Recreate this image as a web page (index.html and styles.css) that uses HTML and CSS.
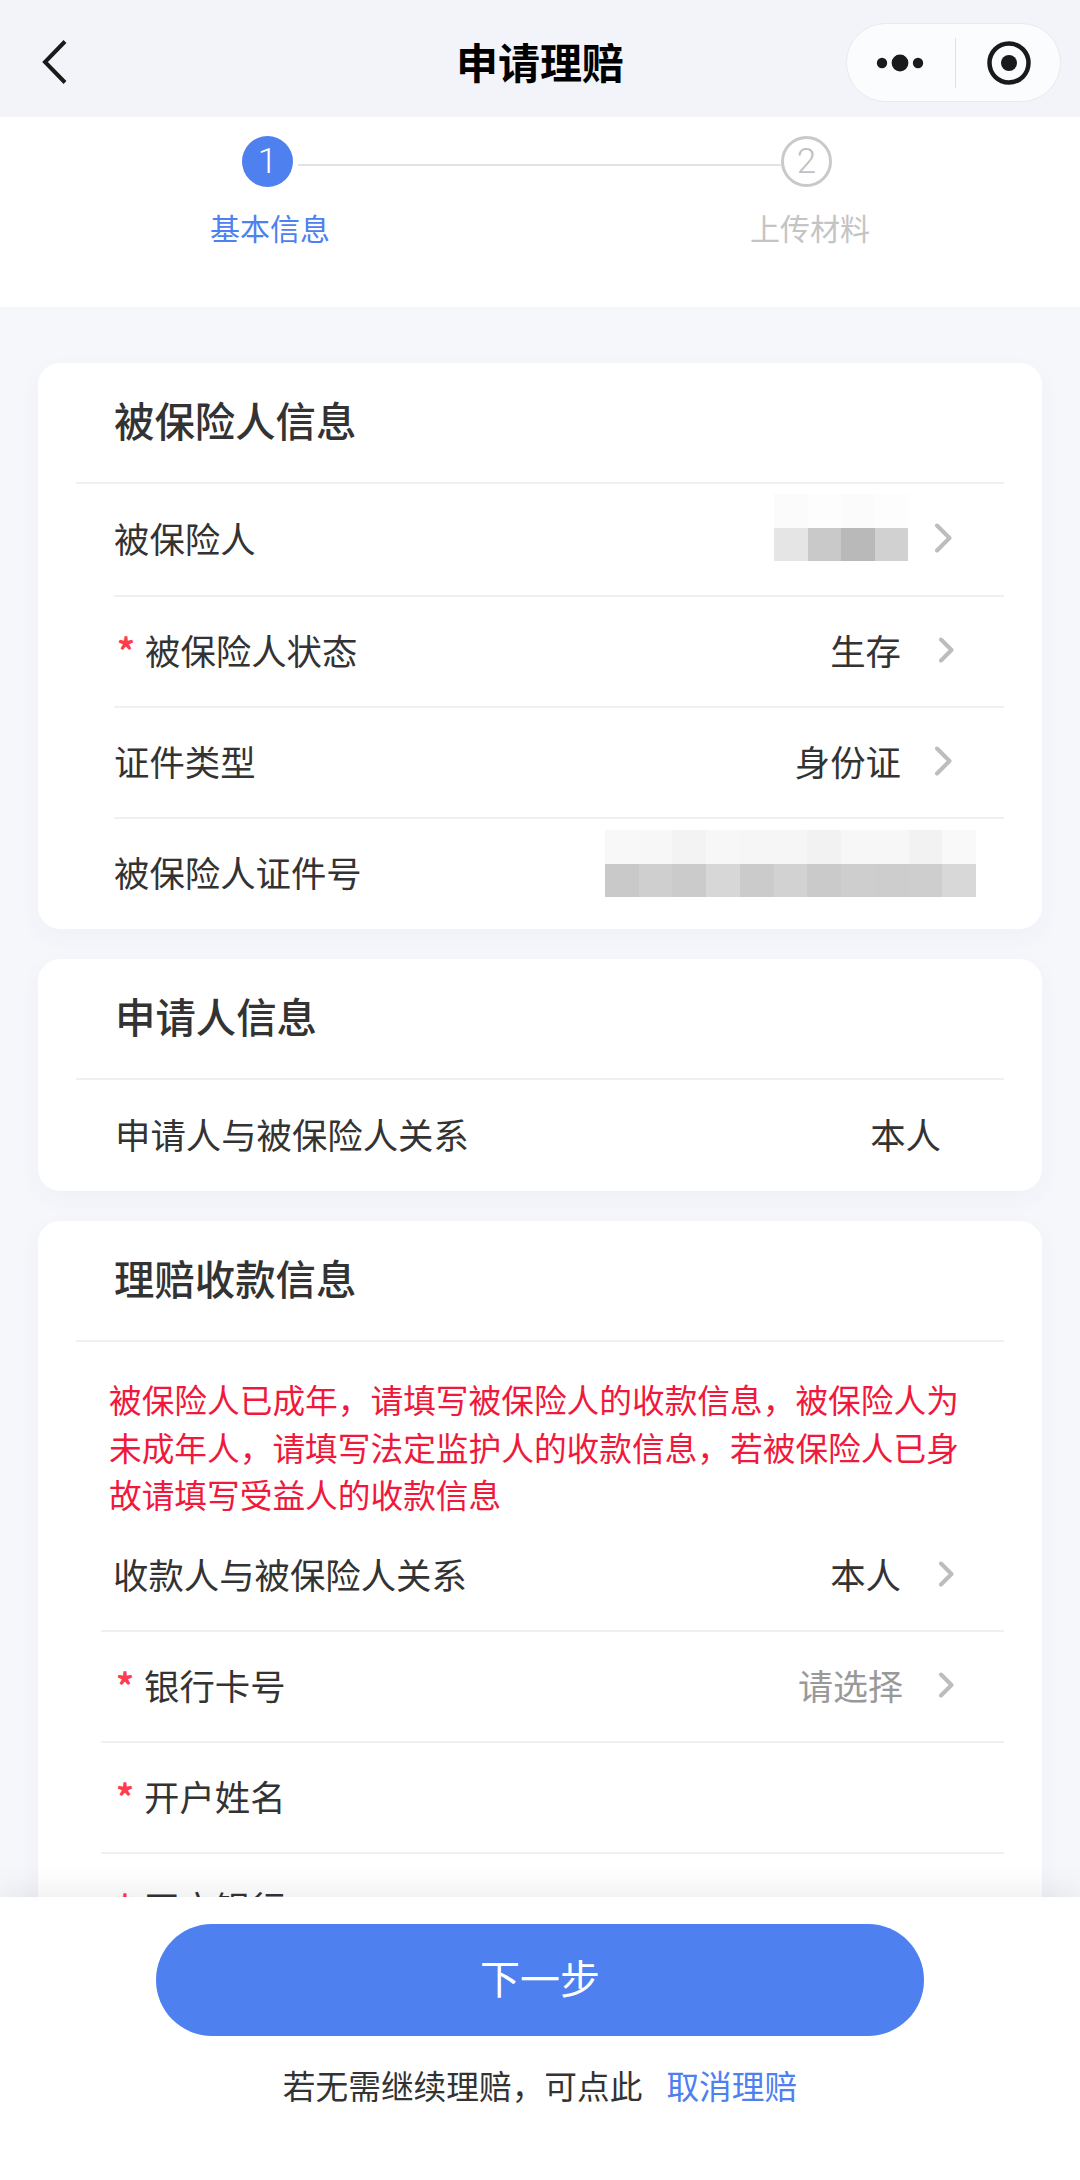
FILE: index.html
```html
<!DOCTYPE html>
<html lang="zh-CN">
<head>
    <meta charset="UTF-8">
    <meta name="viewport" content="width=device-width, initial-scale=1.0">
    <title>申请理赔</title>
    <link rel="stylesheet" href="styles.css">
</head>
<body>
    <header class="nav">
        <button class="nav-back" aria-label="返回">
            <svg width="28" height="46" viewBox="0 0 28 46"><path d="M24 2.5 L4 23 L24 43.5" fill="none" stroke="#1a1a1a" stroke-width="4"/></svg>
        </button>
        <h1 class="nav-title">申请理赔</h1>
        <div class="capsule">
            <svg class="capsule-icon" width="56" height="20" viewBox="0 0 56 20"><circle cx="8" cy="10" r="5.2" fill="#1a1a1a"/><circle cx="26" cy="10" r="8.4" fill="#1a1a1a"/><circle cx="44" cy="10" r="5.2" fill="#1a1a1a"/></svg>
            <span class="capsule-line"></span>
            <svg class="capsule-icon" width="46" height="46" viewBox="0 0 46 46"><circle cx="23" cy="23" r="19.5" fill="none" stroke="#1a1a1a" stroke-width="4.5"/><circle cx="23" cy="23" r="8" fill="#1a1a1a"/></svg>
        </div>
    </header>

    <section class="steps">
        <div class="steps-track">
            <span class="step-dot step-dot-active">1</span>
            <span class="step-line"></span>
            <span class="step-dot">2</span>
        </div>
        <div class="steps-labels">
            <span class="step-label step-label-active">基本信息</span>
            <span class="step-label">上传材料</span>
        </div>
    </section>

    <main class="content">
        <section class="card">
            <h2 class="card-title">被保险人信息</h2>
            <div class="row">
                <span class="row-label">被保险人</span>
                <svg class="mosaic mosaic-name" width="134" height="67" viewBox="0 0 4 2" preserveAspectRatio="none" shape-rendering="crispEdges">
                    <rect x="0" y="0" width="1" height="1" fill="#fbfbfb"/><rect x="1" y="0" width="1" height="1" fill="#fdfdfd"/><rect x="2" y="0" width="1" height="1" fill="#fbfbfb"/><rect x="3" y="0" width="1" height="1" fill="#fdfdfd"/>
                    <rect x="0" y="1" width="1" height="1" fill="#e5e5e5"/><rect x="1" y="1" width="1" height="1" fill="#c9c9c9"/><rect x="2" y="1" width="1" height="1" fill="#b9b9b9"/><rect x="3" y="1" width="1" height="1" fill="#d1d1d1"/>
                </svg>
                <svg class="chevron chevron-lg" width="19" height="30" viewBox="0 0 19 30"><path d="M3 2.5 L15.5 15 L3 27.5" fill="none" stroke="#bdbdbd" stroke-width="4" stroke-linecap="round" stroke-linejoin="round"/></svg>
            </div>
            <div class="row">
                <span class="row-label"><i class="required">*</i>被保险人状态</span>
                <span class="row-value">生存</span>
                <svg class="chevron" width="17" height="26" viewBox="0 0 17 26"><path d="M3 2.5 L13.5 13 L3 23.5" fill="none" stroke="#bdbdbd" stroke-width="4" stroke-linecap="round" stroke-linejoin="round"/></svg>
            </div>
            <div class="row">
                <span class="row-label">证件类型</span>
                <span class="row-value">身份证</span>
                <svg class="chevron chevron-lg" width="19" height="30" viewBox="0 0 19 30"><path d="M3 2.5 L15.5 15 L3 27.5" fill="none" stroke="#bdbdbd" stroke-width="4" stroke-linecap="round" stroke-linejoin="round"/></svg>
            </div>
            <div class="row row-last row-plain">
                <span class="row-label">被保险人证件号</span>
                <svg class="mosaic mosaic-id" width="371" height="67" viewBox="0 0 11 2" preserveAspectRatio="none" shape-rendering="crispEdges">
                    <rect x="0" y="0" width="1" height="1" fill="#f8f8f8"/><rect x="1" y="0" width="1" height="1" fill="#f7f7f7"/><rect x="2" y="0" width="1" height="1" fill="#f3f3f3"/><rect x="3" y="0" width="1" height="1" fill="#f7f7f7"/><rect x="4" y="0" width="1" height="1" fill="#f6f6f6"/><rect x="5" y="0" width="1" height="1" fill="#f6f6f6"/><rect x="6" y="0" width="1" height="1" fill="#f2f2f2"/><rect x="7" y="0" width="1" height="1" fill="#f7f7f7"/><rect x="8" y="0" width="1" height="1" fill="#f7f7f7"/><rect x="9" y="0" width="1" height="1" fill="#f2f2f2"/><rect x="10" y="0" width="1" height="1" fill="#f9f9f9"/>
                    <rect x="0" y="1" width="1" height="1" fill="#c9c9c9"/><rect x="1" y="1" width="1" height="1" fill="#cfcfcf"/><rect x="2" y="1" width="1" height="1" fill="#cbcbcb"/><rect x="3" y="1" width="1" height="1" fill="#d7d7d7"/><rect x="4" y="1" width="1" height="1" fill="#cbcbcb"/><rect x="5" y="1" width="1" height="1" fill="#d2d2d2"/><rect x="6" y="1" width="1" height="1" fill="#cacaca"/><rect x="7" y="1" width="1" height="1" fill="#cecece"/><rect x="8" y="1" width="1" height="1" fill="#cdcdcd"/><rect x="9" y="1" width="1" height="1" fill="#cecece"/><rect x="10" y="1" width="1" height="1" fill="#d8d8d8"/>
                </svg>
            </div>
        </section>

        <section class="card card-applicant">
            <h2 class="card-title">申请人信息</h2>
            <div class="row row-last">
                <span class="row-label">申请人与被保险人关系</span>
                <span class="row-value">本人</span>
            </div>
        </section>

        <section class="card card-payee">
            <h2 class="card-title">理赔收款信息</h2>
            <p class="notice">被保险人已成年，请填写被保险人的收款信息，被保险人为未成年人，请填写法定监护人的收款信息，若被保险人已身故请填写受益人的收款信息</p>
            <div class="row">
                <span class="row-label">收款人与被保险人关系</span>
                <span class="row-value">本人</span>
                <svg class="chevron" width="17" height="26" viewBox="0 0 17 26"><path d="M3 2.5 L13.5 13 L3 23.5" fill="none" stroke="#bdbdbd" stroke-width="4" stroke-linecap="round" stroke-linejoin="round"/></svg>
            </div>
            <div class="row">
                <span class="row-label"><i class="required">*</i>银行卡号</span>
                <span class="row-value row-placeholder">请选择</span>
                <svg class="chevron" width="17" height="26" viewBox="0 0 17 26"><path d="M3 2.5 L13.5 13 L3 23.5" fill="none" stroke="#bdbdbd" stroke-width="4" stroke-linecap="round" stroke-linejoin="round"/></svg>
            </div>
            <div class="row">
                <span class="row-label"><i class="required">*</i>开户姓名</span>
            </div>
            <div class="row">
                <span class="row-label"><i class="required">*</i>开户银行</span>
            </div>
        </section>
    </main>

    <footer class="footer">
        <button class="next-btn">下一步</button>
        <p class="cancel">若无需继续理赔，可点此<a class="cancel-link">取消理赔</a></p>
    </footer>
</body>
</html>
```

FILE: styles.css
```css
* {
    box-sizing: border-box;
    margin: 0;
    padding: 0;
}

body {
    width: 1080px;
    height: 2180px;
    overflow: hidden;
    display: flex;
    flex-direction: column;
    font-family: "Noto Sans CJK SC", "Noto Sans", sans-serif;
    background-color: #f6f7fb;
    color: #333;
}

button {
    border: none;
    background: none;
    font-family: inherit;
}

.nav {
    flex: none;
    height: 117px;
    background-color: #f3f4f9;
    display: grid;
    grid-template-columns: 1fr auto 1fr;
    align-items: center;
}

.nav-back {
    justify-self: start;
    display: flex;
    margin: 7px 0 0 41px;
}

.nav-title {
    font-size: 42px;
    font-weight: 700;
    line-height: 56px;
    color: #000;
    margin-top: 4px;
}

.capsule {
    justify-self: end;
    margin: 8px 19px 0 0;
    width: 215px;
    height: 79px;
    border-radius: 40px;
    border: 1px solid #e9eaef;
    background-color: #fbfcfd;
    display: flex;
    align-items: center;
    padding-left: 27px;
}

.capsule-line {
    width: 1px;
    height: 50px;
    background-color: #dfe0e3;
    margin: 0 30px 0 25px;
}

.steps {
    flex: none;
    height: 190px;
    background-color: #fff;
    padding-top: 19px;
}

.steps-track {
    display: flex;
    align-items: center;
    padding-left: 242px;
}

.step-dot {
    width: 51px;
    height: 51px;
    border-radius: 50%;
    border: 3px solid #c9c9c9;
    color: #c0c0c0;
    font-family: Roboto, sans-serif;
    font-weight: 300;
    font-size: 35px;
    line-height: 45px;
    text-align: center;
}

.step-dot-active {
    border: none;
    background-color: #4e80f0;
    color: #fff;
    line-height: 51px;
}

.step-line {
    width: 483px;
    height: 2px;
    background-color: #e3e3e3;
    margin: 6px 0 0 5px;
}

.steps-labels {
    display: flex;
    gap: 420px;
    padding: 19px 0 0 210px;
}

.step-label {
    width: 120px;
    font-size: 30px;
    line-height: 42px;
    color: #c4c4c4;
    white-space: nowrap;
}

.step-label-active {
    color: #4e80f0;
}

.content {
    flex: 1;
    min-height: 0;
    overflow: hidden;
    padding: 56px 38px 0 38px;
}

.card {
    background-color: #fff;
    border-radius: 22px;
    box-shadow: 0 8px 24px rgba(50, 70, 130, 0.04);
    margin-bottom: 30px;
    overflow: hidden;
}

.card-title {
    height: 121px;
    margin: 0 38px;
    padding-left: 38px;
    border-bottom: 2px solid #f0f0f0;
    font-size: 40.4px;
    font-weight: 500;
    line-height: 113px;
    color: #333;
}

.row {
    height: 111px;
    margin: 0 38px 0 76px;
    padding-right: 49px;
    padding-bottom: 4px;
    border-bottom: 2px solid #f0f0f0;
    display: flex;
    align-items: center;
    justify-content: flex-end;
}

.card-title + .row {
    height: 113px;
}

.row-last {
    border-bottom: none;
}

.row-plain {
    height: 110px;
    padding-right: 28px;
}

.row-label {
    margin-right: auto;
    font-size: 35.4px;
    line-height: 48px;
    color: #333;
    white-space: nowrap;
}

.required {
    display: inline-block;
    width: 31px;
    padding-left: 3px;
    font-style: normal;
    font-weight: 700;
    color: #ff3b4e;
}

.row-value {
    font-size: 35.4px;
    line-height: 48px;
    color: #333;
    margin-right: 37px;
}

.row-placeholder {
    color: #999;
    margin-right: 35px;
    font-size: 35px;
}

.chevron {
    flex: none;
}

.chevron-lg {
    margin-right: 2px;
}

.row-value + .chevron-lg {
    margin-left: -4px;
}

.mosaic {
    flex: none;
    align-self: flex-start;
}

.mosaic-name {
    margin: 10px 26px 0 0;
}

.mosaic-id {
    margin-top: 11px;
}

.card-applicant .card-title {
    padding-left: 39px;
}

.card-applicant .row {
    margin-left: 38px;
    padding-left: 39px;
    padding-right: 63px;
    height: 111px;
}

.card-applicant .row-value {
    margin-right: 0;
}

.card-payee .row {
    margin-left: 63px;
    padding-left: 12px;
}

.notice {
    margin-top: 33px;
    padding: 0 71px 0 71px;
    height: 146px;
    font-size: 32.7px;
    line-height: 47.5px;
    color: #f0193c;
}

.footer {
    flex: none;
    height: 283px;
    position: relative;
    background-color: #fff;
    box-shadow: 0 -8px 30px rgba(0, 0, 0, 0.07);
    padding: 27px 0 0;
    display: flex;
    flex-direction: column;
    align-items: center;
}

.next-btn {
    width: 768px;
    height: 112px;
    border-radius: 56px;
    background-color: #4e80f0;
    color: #fff;
    font-size: 40px;
    font-weight: 400;
    line-height: 104px;
    padding-bottom: 6px;
}

.cancel {
    margin-top: 26px;
    font-size: 32.7px;
    line-height: 46px;
    color: #333;
}

.cancel-link {
    margin-left: 24px;
    color: #4e80f0;
}
```
